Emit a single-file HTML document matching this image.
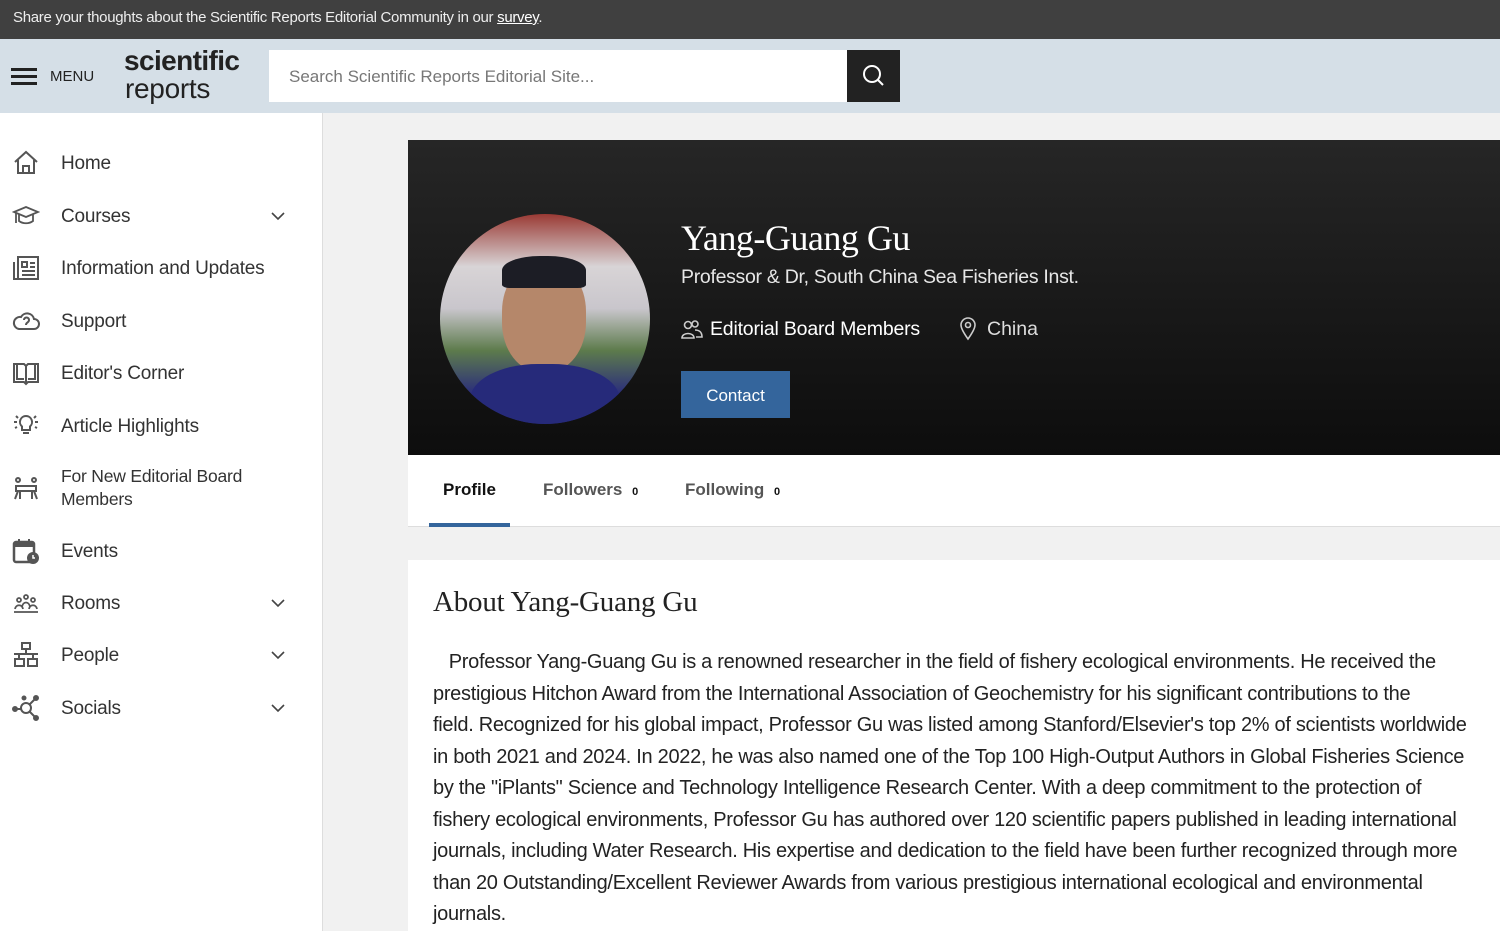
<!DOCTYPE html>
<html><head><meta charset="utf-8"><style>
*{box-sizing:border-box;margin:0;padding:0}
body{width:1500px;height:931px;overflow:hidden;background:#f1f1f1;font-family:"Liberation Sans",sans-serif;color:#222;position:relative}
.top{position:absolute;left:0;top:0;width:1500px;height:39px;background:#404040;color:#eee;font-size:15px;line-height:35px;padding-left:13px;letter-spacing:-0.3px}
.top u{color:#fff}
.hdr{position:absolute;left:0;top:39px;width:1500px;height:74px;background:#d5dfe7}
.side{position:absolute;left:0;top:113px;width:323px;height:818px;background:#fff;border-right:1px solid #ddd}
.item{position:absolute;left:0;width:322px;font-size:19px;color:#333;letter-spacing:-0.2px}
.item svg.ic{position:absolute;left:12px;top:-2px}
.item span{position:absolute;left:61px;top:1px;line-height:24px}
.chev{position:absolute;left:270px;top:4px}
.hero{position:absolute;left:408px;top:140px;width:1092px;height:315px;background:linear-gradient(#262626,#0d0d0d)}
.tabs{position:absolute;left:408px;top:455px;width:1092px;height:72px;background:#fff;border-bottom:1px solid #ddd}
.card{position:absolute;left:408px;top:560px;width:1092px;height:371px;background:#fff}
.para{position:absolute;left:433px;top:647px;font-size:20px;line-height:31.5px;color:#222;white-space:nowrap;letter-spacing:-0.3px}
</style></head><body>
<div class="top">Share your thoughts about the Scientific Reports Editorial Community in our <u>survey</u>.</div>
<div class="hdr">
 <div style="position:absolute;left:11px;top:29px;width:26px;height:3px;background:#222;box-shadow:0 7px 0 #222,0 14px 0 #222"></div>
 <div style="position:absolute;left:50px;top:29px;font-size:15px;color:#222">MENU</div>
 <div style="position:absolute;left:124px;top:7px;font-size:28px;font-weight:bold;color:#222;letter-spacing:-0.6px;line-height:30px">scientific</div>
 <div style="position:absolute;left:125px;top:35px;font-size:28px;color:#222;letter-spacing:-0.3px;line-height:30px">reports</div>
 <div style="position:absolute;left:269px;top:11px;width:578px;height:52px;background:#fff;color:#777;font-size:17px;line-height:54px;padding-left:20px">Search Scientific Reports Editorial Site...</div>
 <div style="position:absolute;left:847px;top:11px;width:53px;height:52px;background:#222">
  <svg width="53" height="52" viewBox="0 0 53 52"><circle cx="25" cy="24" r="8" fill="none" stroke="#fff" stroke-width="2"/><line x1="31" y1="30" x2="36" y2="35" stroke="#fff" stroke-width="2"/></svg></div>
</div>
<div class="side">
 <div class="item" style="top:38px"><svg class="ic" width="28" height="28" viewBox="0 0 28 28" fill="none" stroke="#555" stroke-width="2"><path d="M3 13L14 3l11 10M6 11v13h16V11M11 24v-7h6v7"/></svg><span>Home</span></div>
 <div class="item" style="top:91px"><svg class="ic" width="28" height="28" viewBox="0 0 28 28" fill="none" stroke="#555" stroke-width="1.8"><path d="M2 10l12-5 12 5-12 5zM7 12v7c4 3 10 3 14 0v-7M4 11v10"/></svg><span>Courses</span><svg class="chev" width="16" height="16"><path d="M2 5l6 6 6-6" fill="none" stroke="#444" stroke-width="1.6"/></svg></div>
 <div class="item" style="top:143px"><svg class="ic" width="28" height="28" viewBox="0 0 28 28" fill="none" stroke="#555" stroke-width="2"><rect x="6" y="3" width="20" height="22"/><path d="M2 8v17h4M10 8h5v5h-5zM18 9h5M18 13h5M10 17h13M10 21h13"/></svg><span>Information and Updates</span></div>
 <div class="item" style="top:196px"><svg class="ic" width="28" height="28" viewBox="0 0 28 28" fill="none" stroke="#555" stroke-width="2"><path d="M7 22h15a5 5 0 000-10 7 7 0 00-13-2 6 6 0 00-2 12z"/><path d="M12 13a2.5 2.5 0 114 2c-1 1-2 1-2 3"/></svg><span>Support</span></div>
 <div class="item" style="top:248px"><svg class="ic" width="28" height="28" viewBox="0 0 28 28" fill="none" stroke="#555" stroke-width="2"><path d="M2 5h10l2 2 2-2h10v18H16l-2 2-2-2H2zM14 7v18M5 5v15h7M23 5v15h-7"/></svg><span>Editor's Corner</span></div>
 <div class="item" style="top:301px"><svg class="ic" width="28" height="28" viewBox="0 0 28 28" fill="none" stroke="#555" stroke-width="2"><path d="M14 4a6 6 0 00-4 10.5V18h8v-3.5A6 6 0 0014 4zM11 21h6M2 10h3M23 10h3M4 4l2 2M24 4l-2 2M3 16l2-1M25 16l-2-1"/></svg><span>Article Highlights</span></div>
 <div class="item" style="top:351px"><svg class="ic" style="top:12px" width="28" height="28" viewBox="0 0 28 28" fill="none" stroke="#555" stroke-width="2"><circle cx="6" cy="4" r="2"/><circle cx="22" cy="4" r="2"/><path d="M4 10h20v5H4zM6 15l-3 8M8 15v8M20 15v8M22 15l3 8"/></svg><span style="font-size:17.5px;line-height:23px">For New Editorial Board<br>Members</span></div>
 <div class="item" style="top:426px"><svg class="ic" width="28" height="28" viewBox="0 0 28 28"><rect x="2" y="5" width="20" height="20" rx="2" fill="none" stroke="#555" stroke-width="2.5"/><rect x="2" y="5" width="20" height="5" fill="#555"/><path d="M7 2v5M17 2v5" stroke="#555" stroke-width="2"/><circle cx="21" cy="21" r="6" fill="#555"/><path d="M21 18v3h2" stroke="#fff" stroke-width="1.5" fill="none"/></svg><span>Events</span></div>
 <div class="item" style="top:478px"><svg class="ic" width="28" height="28" viewBox="0 0 28 28" fill="none" stroke="#555" stroke-width="1.8"><circle cx="14" cy="8" r="2"/><circle cx="7" cy="11" r="2"/><circle cx="21" cy="11" r="2"/><path d="M3 20c1-5 7-5 8 0M10 18c1-6 7-6 8 0M17 20c1-5 7-5 8 0M2 23h24"/></svg><span>Rooms</span><svg class="chev" width="16" height="16"><path d="M2 5l6 6 6-6" fill="none" stroke="#444" stroke-width="1.6"/></svg></div>
 <div class="item" style="top:530px"><svg class="ic" width="28" height="28" viewBox="0 0 28 28" fill="none" stroke="#555" stroke-width="2"><rect x="10" y="2" width="8" height="6"/><rect x="3" y="18" width="9" height="7"/><rect x="16" y="18" width="9" height="7"/><path d="M14 8v5M2 13h24M7 13v5M21 13v5"/></svg><span>People</span><svg class="chev" width="16" height="16"><path d="M2 5l6 6 6-6" fill="none" stroke="#444" stroke-width="1.6"/></svg></div>
 <div class="item" style="top:583px"><svg class="ic" width="28" height="28" viewBox="0 0 28 28" fill="none" stroke="#555" stroke-width="2"><circle cx="14" cy="14" r="5"/><circle cx="3" cy="15" r="2" fill="#555"/><circle cx="24" cy="4" r="2" fill="#555"/><circle cx="24" cy="24" r="2" fill="#555"/><circle cx="12" cy="4" r="1.5" fill="#555"/><path d="M5 15h4M18 10l5-5M18 18l5 5"/></svg><span>Socials</span><svg class="chev" width="16" height="16"><path d="M2 5l6 6 6-6" fill="none" stroke="#444" stroke-width="1.6"/></svg></div>
</div>
<div class="hero">
 <div style="position:absolute;left:32px;top:74px;width:210px;height:210px;border-radius:50%;overflow:hidden;background:linear-gradient(180deg,#9a3a34 0%,#d8d4d6 25%,#c9c6cc 45%,#5d7b4c 65%,#2c2f7a 85%,#23266b 100%)">
  <div style="position:absolute;left:62px;top:48px;width:84px;height:110px;border-radius:45%;background:#b5876a"></div>
  <div style="position:absolute;left:62px;top:42px;width:84px;height:32px;border-radius:45% 45% 10% 10%;background:#1c1d25"></div>
  <div style="position:absolute;left:30px;top:150px;width:150px;height:80px;border-radius:45% 45% 0 0;background:#262a7a"></div>
 </div>
 <div style="position:absolute;left:273px;top:77px;font-family:'Liberation Serif',serif;font-size:36px;color:#fff;letter-spacing:-0.5px">Yang-Guang Gu</div>
 <div style="position:absolute;left:273px;top:126px;font-size:19.5px;color:#e6e6e6;letter-spacing:-0.3px">Professor &amp; Dr, South China Sea Fisheries Inst.</div>
 <svg style="position:absolute;left:273px;top:179px" width="22" height="22" viewBox="0 0 22 22" fill="none" stroke="#ccc" stroke-width="1.6"><circle cx="7" cy="6" r="3.5"/><circle cx="14" cy="5" r="3"/><path d="M1 19c0-6 12-6 12 0zM14 11c4 0 7 2 7 7h-6"/></svg>
 <div style="position:absolute;left:302px;top:178px;font-size:19.5px;color:#fff;letter-spacing:-0.2px">Editorial Board Members</div>
 <svg style="position:absolute;left:551px;top:177px" width="18" height="24" viewBox="0 0 18 24" fill="none" stroke="#ccc" stroke-width="1.6"><path d="M9 22C4 15 2 11 2 8a7 7 0 0114 0c0 3-2 7-7 14z"/><circle cx="9" cy="8" r="2.5"/></svg>
 <div style="position:absolute;left:579px;top:178px;font-size:19.5px;color:#ddd">China</div>
 <div style="position:absolute;left:273px;top:231px;width:109px;height:47px;background:#34659c;color:#fff;font-size:17px;line-height:49px;text-align:center">Contact</div>
</div>
<div class="tabs">
 <div style="position:absolute;left:35px;top:25px;font-size:17px;font-weight:bold;color:#111">Profile</div>
 <div style="position:absolute;left:21px;top:68px;width:81px;height:4px;background:#34659c"></div>
 <div style="position:absolute;left:135px;top:25px;font-size:17px;font-weight:bold;color:#555">Followers <span style="font-size:11px;color:#111;margin-left:5px">0</span></div>
 <div style="position:absolute;left:277px;top:25px;font-size:17px;font-weight:bold;color:#555">Following <span style="font-size:11px;color:#111;margin-left:5px">0</span></div>
</div>
<div class="card"><div style="position:absolute;left:25px;top:26px;font-family:'Liberation Serif',serif;font-size:29px;color:#222;letter-spacing:-0.2px">About Yang-Guang Gu</div></div>
<div class="para">&nbsp;&nbsp;&nbsp;Professor Yang-Guang Gu is a renowned researcher in the field of fishery ecological environments. He received the<br>prestigious Hitchon Award from the International Association of Geochemistry for his significant contributions to the<br>field. Recognized for his global impact, Professor Gu was listed among Stanford/Elsevier's top 2% of scientists worldwide<br>in both 2021 and 2024. In 2022, he was also named one of the Top 100 High-Output Authors in Global Fisheries Science<br>by the "iPlants" Science and Technology Intelligence Research Center. With a deep commitment to the protection of<br>fishery ecological environments, Professor Gu has authored over 120 scientific papers published in leading international<br>journals, including Water Research. His expertise and dedication to the field have been further recognized through more<br>than 20 Outstanding/Excellent Reviewer Awards from various prestigious international ecological and environmental<br>journals.</div>
</body></html>
